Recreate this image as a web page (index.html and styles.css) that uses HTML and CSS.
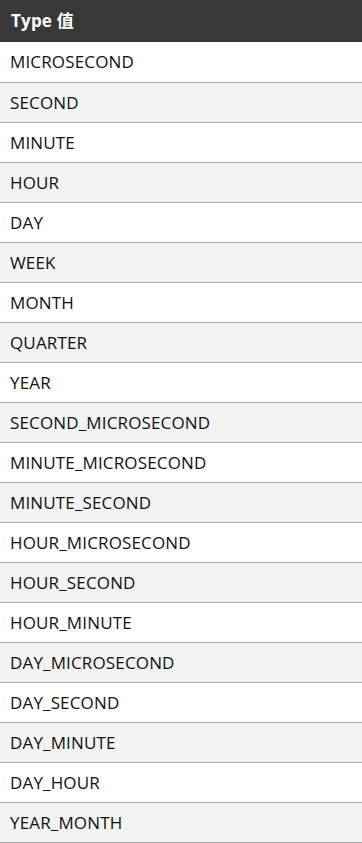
FILE: index.html
```html
<!DOCTYPE html>
<html><head><meta charset="utf-8"><link rel="stylesheet" href="styles.css"></head>
<body>
<table class="types">
<thead><tr><th>Type 值</th></tr></thead>
<tbody>
<tr><td>MICROSECOND</td></tr>
<tr><td>SECOND</td></tr>
<tr><td>MINUTE</td></tr>
<tr><td>HOUR</td></tr>
<tr><td>DAY</td></tr>
<tr><td>WEEK</td></tr>
<tr><td>MONTH</td></tr>
<tr><td>QUARTER</td></tr>
<tr><td>YEAR</td></tr>
<tr><td>SECOND_MICROSECOND</td></tr>
<tr><td>MINUTE_MICROSECOND</td></tr>
<tr><td>MINUTE_SECOND</td></tr>
<tr><td>HOUR_MICROSECOND</td></tr>
<tr><td>HOUR_SECOND</td></tr>
<tr><td>HOUR_MINUTE</td></tr>
<tr><td>DAY_MICROSECOND</td></tr>
<tr><td>DAY_SECOND</td></tr>
<tr><td>DAY_MINUTE</td></tr>
<tr><td>DAY_HOUR</td></tr>
<tr><td>YEAR_MONTH</td></tr>
</tbody>
</table>
</body></html>
```
FILE: styles.css
```css
body{margin:0;background:#fff}
.types{width:100%;border-collapse:collapse;font-family:"Open Sans","Noto Sans CJK SC",sans-serif}
.types th{background:#383838;color:#fff;text-align:left;font-weight:700;font-size:17px;height:42px;padding:0 11px;box-sizing:border-box;line-height:22px;letter-spacing:0.2px}
.types td{height:40px;box-sizing:border-box;padding:0 10px;font-size:17px;line-height:23px;color:#111;border-bottom:1px solid #a9a9a9;letter-spacing:0.15px}
.types tbody tr:nth-child(even) td{background:#f3f3f3}
```
